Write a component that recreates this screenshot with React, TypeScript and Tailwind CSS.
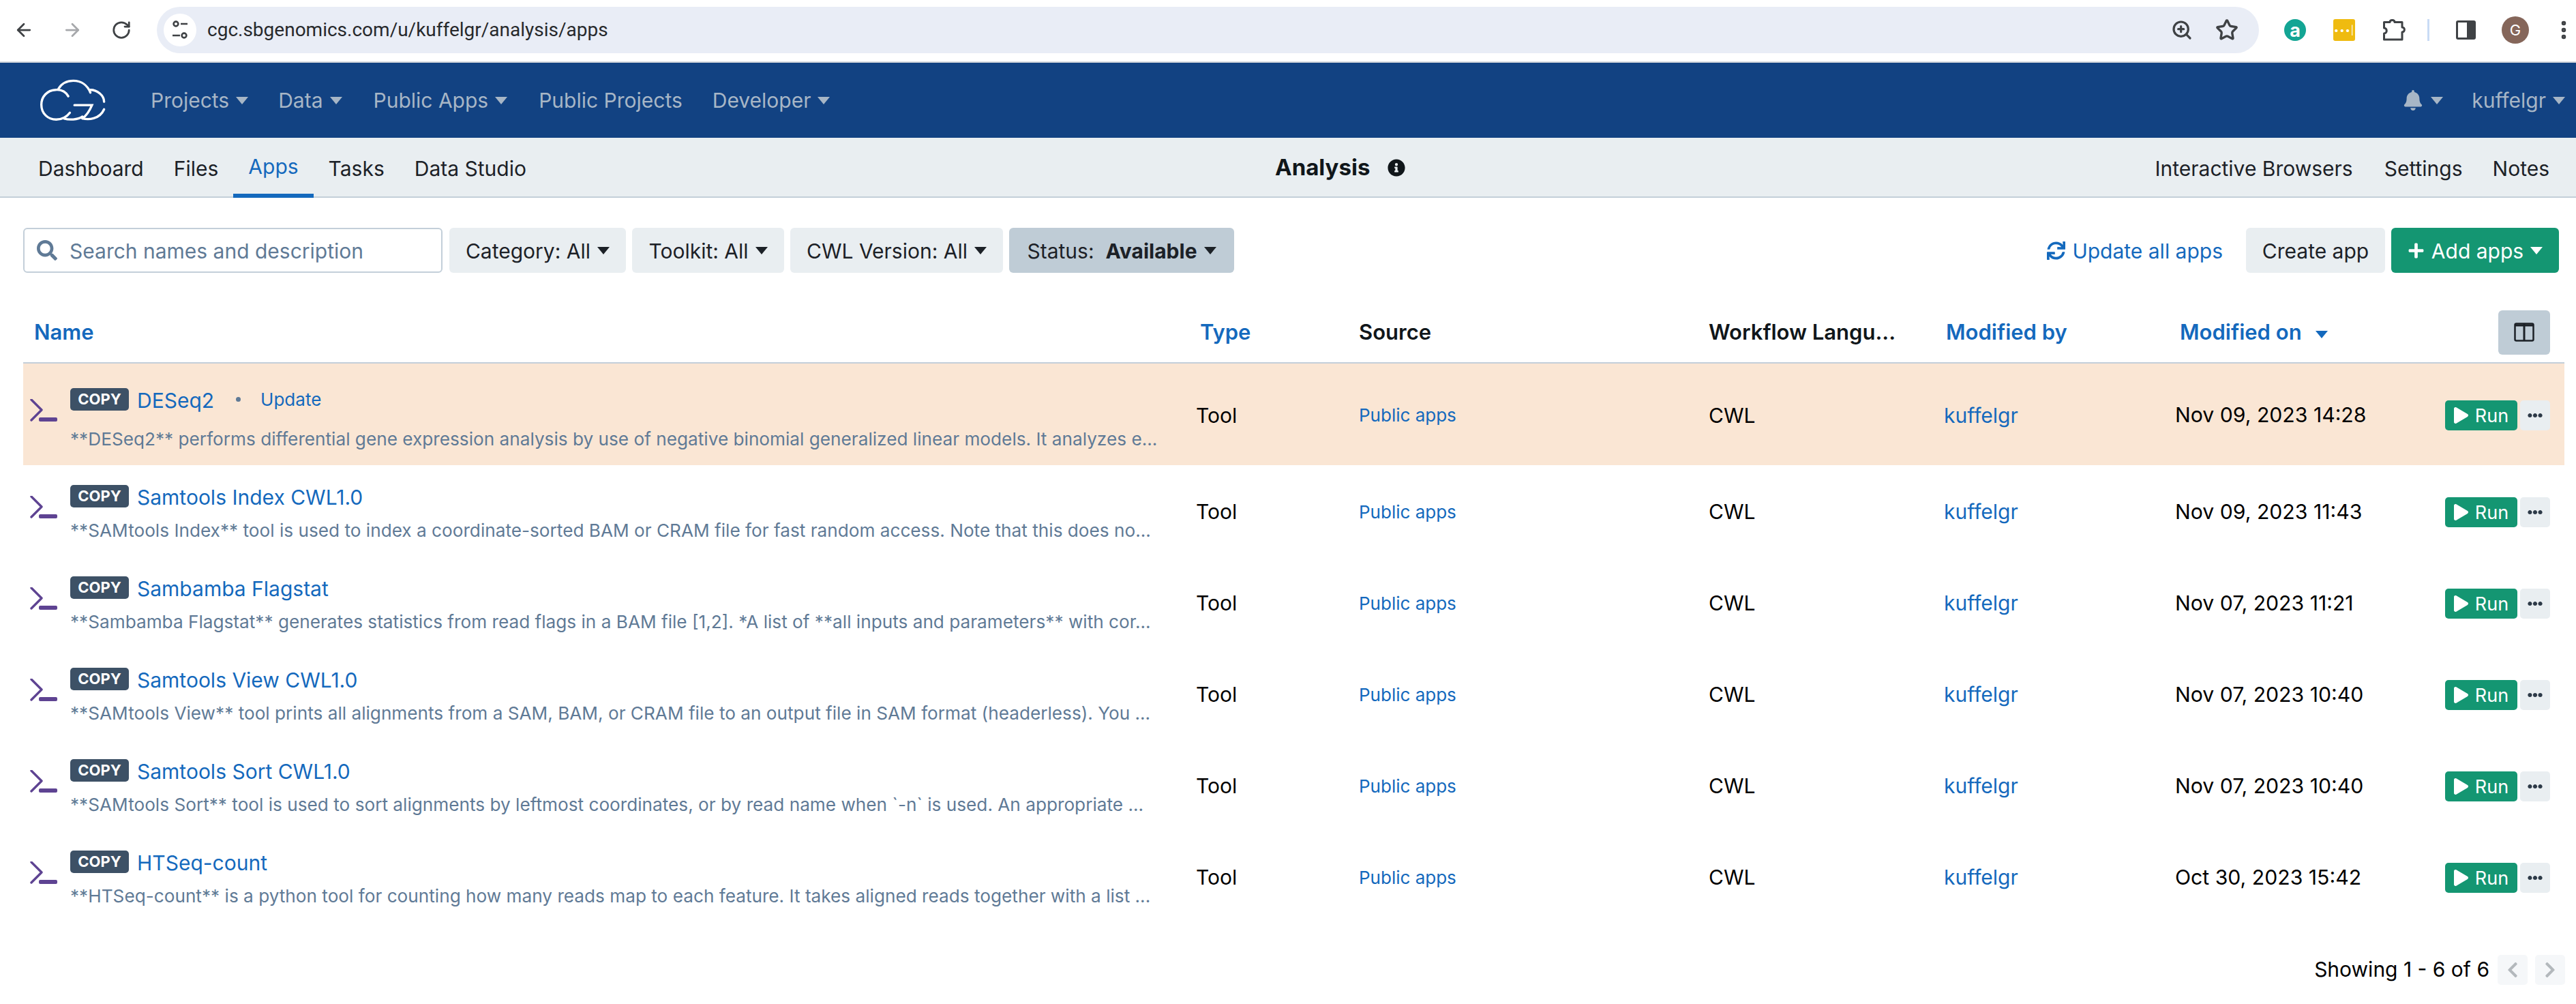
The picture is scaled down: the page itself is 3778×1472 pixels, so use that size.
import React from 'react';
import { ArrowLeft, ArrowRight, RotateCw, ZoomIn, Star, EllipsisVertical } from 'lucide-react';
import { FaBell, FaChevronLeft, FaChevronRight, FaEllipsisH, FaInfoCircle, FaPlay, FaPlus, FaSearch, FaSync } from 'react-icons/fa';

const apps = [
  { name: 'DESeq2', desc: '**DESeq2** performs differential gene expression analysis by use of negative binomial generalized linear models. It analyzes e...', date: 'Nov 09, 2023 14:28', highlight: true },
  { name: 'Samtools Index CWL1.0', desc: '**SAMtools Index** tool is used to index a coordinate-sorted BAM or CRAM file for fast random access. Note that this does no...', date: 'Nov 09, 2023 11:43' },
  { name: 'Sambamba Flagstat', desc: '**Sambamba Flagstat** generates statistics from read flags in a BAM file [1,2]. *A list of **all inputs and parameters** with cor...', date: 'Nov 07, 2023 11:21' },
  { name: 'Samtools View CWL1.0', desc: '**SAMtools View** tool prints all alignments from a SAM, BAM, or CRAM file to an output file in SAM format (headerless). You ...', date: 'Nov 07, 2023 10:40' },
  { name: 'Samtools Sort CWL1.0', desc: '**SAMtools Sort** tool is used to sort alignments by leftmost coordinates, or by read name when `-n` is used. An appropriate ...', date: 'Nov 07, 2023 10:40' },
  { name: 'HTSeq-count', desc: '**HTSeq-count** is a python tool for counting how many reads map to each feature. It takes aligned reads together with a list ...', date: 'Oct 30, 2023 15:42' },
];

const COLS = 'grid grid-cols-[1720px_239px_513px_345px_339px_571px]';

const Caret = ({ className = 'border-t-[#a7b6c6]' }: { className?: string }) => (
  <span className={`inline-block w-0 h-0 border-x-[9px] border-x-transparent border-t-[11px] ${className}`} />
);

const NavItem = ({ label, caret = true, className = '' }: { label: string; caret?: boolean; className?: string }) => (
  <div className={`flex items-center gap-[10px] text-[30px] text-[#a7b6c6] ${className}`}>
    <span className="pt-[1px]">{label}</span>
    {caret && <Caret />}
  </div>
);

const FilterButton = ({ children, width, active }: { children: React.ReactNode; width: string; active?: boolean }) => (
  <div className={`h-[66px] ${width} ${active ? 'bg-[#bfccd6]' : 'bg-[#e9eef1]'} rounded-[6px] flex items-center justify-center gap-[10px] text-[30px] text-[#1c2127]`}>
    <span className="pt-[2px]">{children}</span>
    <Caret className="border-t-[#1c2127]" />
  </div>
);

const ToolIcon = () => (
  <svg viewBox="0 0 40 34" className="w-[40px] h-[34px] shrink-0">
    <path d="M2 2 L17 17 L2 32" fill="none" stroke="#5e4392" strokeWidth="3.4" strokeLinecap="round" strokeLinejoin="round" transform="translate(0 -1)" />
    <rect x="13" y="27" width="27" height="6" rx="2" fill="#5e4392" />
  </svg>
);

const Logo = () => (
  <svg viewBox="55 33 290 185" className="w-[97px] h-[62px]" fill="none" stroke="#fff" strokeWidth="10" strokeLinecap="round">
    <path d="M178 108 C 165 85 145 78 122 80 C 85 82 60 110 60 145 C 60 185 90 210 125 210 C 150 210 170 200 185 180" />
    <path d="M135 75 C 150 50 175 40 200 40 C 235 40 262 60 275 92" />
    <path d="M275 80 C 305 80 335 105 335 132" />
    <path d="M205 147 H282 C 270 175 255 195 240 205" />
    <path d="M160 206 C 180 212 220 212 240 197" />
    <path d="M240 205 C 265 212 315 210 335 165" />
  </svg>
);

const ExtensionIcon = () => (
  <svg viewBox="0 0 34 34" className="ml-[40px] w-[34px] h-[34px]" fill="none" stroke="#3f4245" strokeWidth="3" strokeLinejoin="round">
    <path d="M2.5 5.5 H11 C11 1.5 18 1.5 18 5.5 H29 V13 C33.5 13 33.5 20 29 20 V31 H2.5 V22 C7.5 22 7.5 14 2.5 14 Z" />
  </svg>
);

const AppRow = ({ app }: { app: (typeof apps)[number] }) => (
  <div className={`${COLS} items-center ${app.highlight ? 'h-[149px] bg-[#fae6d4]' : 'h-[134px]'}`}>
    <div className={`self-start flex pl-[10px] gap-[19px] ${app.highlight ? 'pt-[36px]' : 'pt-[29px]'}`}>
      <div className="pt-[16px]">
        <ToolIcon />
      </div>
      <div className="min-w-0">
        <div className="flex items-center h-[33px]">
          <span className="h-[33px] w-[86px] rounded-[5px] bg-[#3d5166] text-white text-[22px] font-bold flex items-center justify-center">COPY</span>
          <span className="ml-[12px] text-[30px] text-[#1469bd] leading-[36px] mt-[3px]">{app.name}</span>
          {app.highlight && (
            <>
              <span className="ml-[32px] w-[7px] h-[7px] rounded-full bg-[#5f7a96]" />
              <span className="ml-[29px] text-[26px] text-[#1469bd]">Update</span>
            </>
          )}
        </div>
        <div className={`${app.highlight ? 'mt-[24px]' : 'mt-[16px]'} w-[1600px] text-[26.2px] leading-[36px] text-[#5f7a96] whitespace-nowrap`}>{app.desc}</div>
      </div>
    </div>
    <div className="pt-[3px] text-[30px] text-black">Tool</div>
    <div className="pt-[2px] text-[26px] text-[#1469bd]">Public apps</div>
    <div className="pt-[3px] text-[30px] text-black">CWL</div>
    <div className="pt-[3px] text-[30px] text-[#1469bd]">kuffelgr</div>
    <div className="flex items-center justify-between pr-[21px]">
      <span className="pt-[3px] text-[30.2px] text-black">{app.date}</span>
      <div className="flex gap-[4px] mt-[4px]">
        <div className="w-[106px] h-[44px] rounded-[5px] bg-[#149672] text-white text-[27px] flex items-center justify-center gap-[10px]">
          <FaPlay className="w-[21px] h-[24px]" />
          <span className="pt-[2px]">Run</span>
        </div>
        <div className="w-[44px] h-[44px] rounded-[5px] bg-[#e9eef1] flex items-center justify-center">
          <FaEllipsisH className="w-[22px] h-[22px] text-[#2d3a48]" />
        </div>
      </div>
    </div>
  </div>
);

export default function App() {
  return (
    <div className="w-[3778px] h-[1472px] overflow-hidden bg-white font-[Inter,sans-serif]">
      {/* browser chrome */}
      <div className="h-[92px] border-b-[2px] border-[#d3d7dc] flex items-start pt-[10px]">
        <div className="flex items-center h-[68px] w-[230px] pl-[20px] text-[#3f4245]">
          <ArrowLeft className="w-[30px] h-[30px]" strokeWidth={2.2} />
          <ArrowRight className="w-[30px] h-[30px] ml-[41px] text-[#a6a8ab]" strokeWidth={2.2} />
          <RotateCw className="w-[30px] h-[30px] ml-[42px]" strokeWidth={2.2} />
        </div>
        <div className="w-[3083px] h-[68px] rounded-full bg-[#e9edf6] flex items-center pl-[10px] pr-[30px]">
          <div className="w-[48px] h-[48px] rounded-full bg-white flex items-center justify-center">
            <svg viewBox="0 0 24 32" className="w-[24px] h-[32px]" fill="none" stroke="#3f4245" strokeWidth="2.6">
              <circle cx="6" cy="7" r="3.4" />
              <path d="M13 7 H23 M1 24 H12" />
              <circle cx="18" cy="24" r="3.4" />
            </svg>
          </div>
          <span className="ml-[16px] text-[28px] text-[#27292c] font-[Roboto,sans-serif]">cgc.sbgenomics.com/u/kuffelgr/analysis/apps</span>
          <div className="ml-auto flex items-center gap-[33px] text-[#3f4245]">
            <ZoomIn className="w-[32px] h-[32px]" strokeWidth={2.4} />
            <Star className="w-[34px] h-[34px]" strokeWidth={2.4} />
          </div>
        </div>
        <div className="flex items-center h-[68px] pl-[37px] text-[#3f4245]">
          <div className="w-[32px] h-[32px] rounded-full bg-[#13a594] text-white text-[27px] font-bold flex items-center justify-center leading-none">a</div>
          <div className="ml-[40px] w-[32px] h-[32px] rounded-[3px] bg-[#efbb10] text-white text-[13px] flex items-center justify-center leading-none tracking-[1px]">•••|</div>
          <ExtensionIcon />
          <div className="ml-[32px] w-[3px] h-[32px] bg-[#c9dbf5]" />
          <div className="ml-[39px] w-[29px] h-[28px] rounded-[3px] border-[3px] border-[#3f4245] border-r-[13px]" />
          <div className="ml-[38px] w-[40px] h-[40px] rounded-full bg-[#85665a] text-white text-[22px] flex items-center justify-center">G</div>
          <EllipsisVertical className="ml-[34px] w-[34px] h-[34px]" strokeWidth={2.6} />
        </div>
      </div>

      {/* top nav */}
      <div className="h-[110px] bg-[#124282] flex items-center pl-[59px] pr-[16px]">
        <Logo />
        <NavItem label="Projects" className="ml-[65px]" />
        <NavItem label="Data" className="ml-[44px]" />
        <NavItem label="Public Apps" className="ml-[46px]" />
        <NavItem label="Public Projects" caret={false} className="ml-[46px]" />
        <NavItem label="Developer" className="ml-[44px]" />
        <div className="ml-auto flex items-center gap-[11px] text-[#a7b6c6]">
          <FaBell className="w-[30px] h-[30px]" />
          <Caret />
        </div>
        <NavItem label="kuffelgr" className="ml-[42px]" />
      </div>

      {/* section tabs */}
      <div className="h-[88px] bg-[#e9eef1] border-b-[2px] border-[#c3cfd9] grid grid-cols-[1870px_auto_1fr] items-stretch text-[30px] text-[#1c2127]">
        <div className="flex pl-[34px]">
          <div className="px-[22px] pt-[2px] flex items-center">Dashboard</div>
          <div className="px-[22px] pt-[2px] flex items-center">Files</div>
          <div className="px-[22px] pt-[2px] flex items-center text-[#1469bd] border-b-[6px] border-[#1469bd] h-[88px]">Apps</div>
          <div className="px-[22px] pt-[2px] flex items-center">Tasks</div>
          <div className="px-[22px] pt-[2px] flex items-center">Data Studio</div>
        </div>
        <div className="flex items-center gap-[26px] font-bold text-[33px] text-[#10161a]">
          <span>Analysis</span>
          <FaInfoCircle className="w-[26px] h-[26px]" />
        </div>
        <div className="flex justify-end pr-[16px]">
          <div className="px-[23px] pt-[2px] flex items-center">Interactive Browsers</div>
          <div className="px-[23px] pt-[2px] flex items-center">Settings</div>
          <div className="pl-[21px] pr-[23px] pt-[2px] flex items-center">Notes</div>
        </div>
      </div>

      {/* toolbar */}
      <div className="mt-[44px] pl-[34px] pr-[25px] flex items-center">
        <div className="w-[615px] h-[66px] rounded-[6px] border-[2px] border-[#c3cfd9] flex items-center pl-[18px] gap-[18px] text-[30px] text-[#5f7a96]">
          <FaSearch className="w-[30px] h-[30px]" />
          <span className="pt-[2px]">Search names and description</span>
        </div>
        <div className="ml-[10px] flex gap-[9px]">
          <FilterButton width="w-[259px]">Category: All</FilterButton>
          <FilterButton width="w-[223px]">Toolkit: All</FilterButton>
          <FilterButton width="w-[312px]">CWL Version: All</FilterButton>
          <FilterButton width="w-[330px]" active>
            Status:&nbsp; <b className="font-bold">Available</b>
          </FilterButton>
        </div>
        <div className="ml-auto flex items-center text-[30px]">
          <div className="flex items-center gap-[10px] text-[#1469bd]">
            <FaSync className="w-[27px] h-[27px]" />
            <span className="pt-[2px]">Update all apps</span>
          </div>
          <div className="ml-[34px] w-[204px] h-[66px] rounded-[6px] bg-[#e9eef1] text-[#1c2127] flex items-center justify-center pt-[2px]">Create app</div>
          <div className="ml-[9px] w-[246px] h-[66px] rounded-[6px] bg-[#149672] text-white flex items-center justify-center gap-[10px]">
            <FaPlus className="w-[25px] h-[25px]" />
            <span className="pt-[2px]">Add apps</span>
            <Caret className="border-t-white" />
          </div>
        </div>
      </div>

      {/* table */}
      <div className="mt-[43px] ml-[34px] w-[3727px]">
        <div className={`${COLS} h-[90px] items-center border-b-[2px] border-[#c3cfd9] text-[31px] font-semibold`}>
          <div className="pl-[16px] text-[#1469bd]">Name</div>
          <div className="pl-[6px] text-[#1469bd]">Type</div>
          <div className="text-[#10161a]">Source</div>
          <div className="text-[#10161a]">Workflow Langu...</div>
          <div className="pl-[3px] text-[#1469bd]">Modified by</div>
          <div className="pl-[7px] flex items-center justify-between pr-[21px]">
            <span className="text-[#1469bd] flex items-center gap-[20px]">
              Modified on
              <Caret className="border-t-[#1469bd] mt-[6px]" />
            </span>
            <div className="w-[76px] h-[65px] rounded-[6px] bg-[#bfccd6] flex items-center justify-center">
              <svg viewBox="0 0 30 28" className="w-[30px] h-[28px]" fill="none" stroke="#1c2127" strokeWidth="2.5">
                <rect x="1.5" y="1.5" width="27" height="25" rx="2" />
                <path d="M1.5 4 H28.5 M15 2 V26" strokeWidth="3" />
              </svg>
            </div>
          </div>
        </div>
        {apps.map((app) => (
          <AppRow key={app.name} app={app} />
        ))}
      </div>

      {/* pagination */}
      <div className="mt-[47px] pr-[16px] flex justify-end items-center text-[30px] text-black">
        <span>Showing 1 - 6 of 6</span>
        <div className="ml-[12px] w-[44px] h-[44px] rounded-[5px] bg-[#f5f7f9] flex items-center justify-center text-[#b3b8bc]">
          <FaChevronLeft className="w-[22px] h-[26px]" />
        </div>
        <div className="ml-[11px] w-[44px] h-[44px] rounded-[5px] bg-[#f5f7f9] flex items-center justify-center text-[#b3b8bc]">
          <FaChevronRight className="w-[22px] h-[26px]" />
        </div>
      </div>
    </div>
  );
}
